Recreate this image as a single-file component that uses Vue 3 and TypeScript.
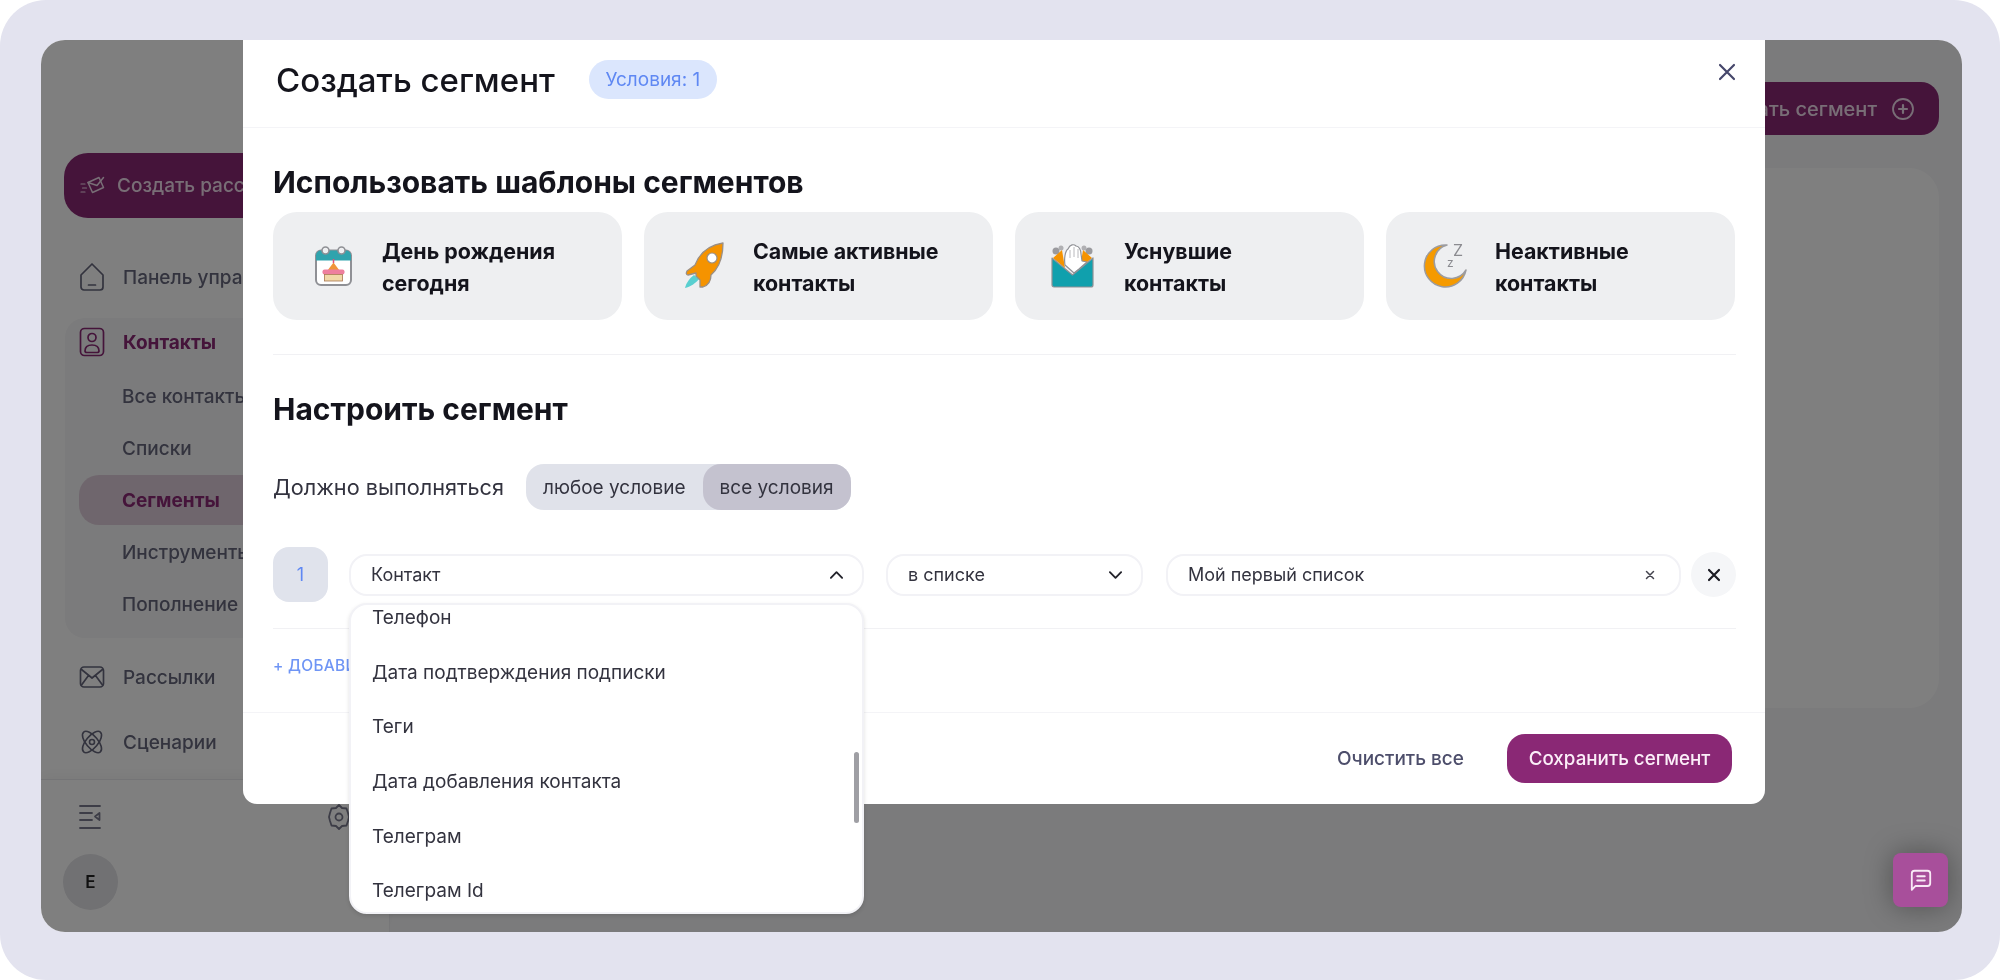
<template>
  <div class="page">
    <div class="window">
      <aside class="sidebar">
        <div class="side-top">
          <button class="create-btn">
            <svg class="create-ic" viewBox="0 0 28 24" fill="none" stroke="currentColor" stroke-width="1.5" stroke-linejoin="round" stroke-linecap="round">
              <path d="M9 8.500 20 3.500l4.500 10-11 5z" />
              <path d="M9 8.500l9 3 6.500-8" />
              <path d="M2 10h4M3.500 14h4M2 18h4" stroke-width="1.2" />
            </svg>
            <span>Создать рассылку</span>
          </button>

          <a class="nav-item nav-first">
            <svg class="nav-ic" viewBox="0 0 26 30" fill="none" stroke="currentColor" stroke-width="1.7" stroke-linejoin="round" stroke-linecap="round">
              <path d="M2 13 13 2l11 11v12a3 3 0 0 1-3 3H5a3 3 0 0 1-3-3z" />
              <path d="M9.500 23h7" />
            </svg>
            <span>Панель управления</span>
          </a>

          <div class="nav-group">
            <a class="nav-item nav-head">
              <svg class="nav-ic" viewBox="0 0 26 30" fill="none" stroke="currentColor" stroke-width="1.7" stroke-linejoin="round">
                <rect x="1.500" y="1.500" width="23" height="27" rx="4" />
                <circle cx="13" cy="10.500" r="4" />
                <path d="M6 24c0-4 3-6 7-6s7 2 7 6c0 1-1 1.500-2 1.500H8c-1 0-2-.5-2-1.500z" />
              </svg>
              <span>Контакты</span>
            </a>
            <a v-for="item in contactLinks" :key="item" class="sub-item" :class="{ active: item === 'Сегменты' }">{{ item }}</a>
          </div>

          <a class="nav-item nav-mail">
            <svg class="nav-ic" viewBox="0 0 26 26" fill="none" stroke="currentColor" stroke-width="1.7" stroke-linejoin="round" stroke-linecap="round">
              <rect x="1.500" y="3" width="23" height="20" rx="3.500" />
              <path d="M2.500 5.500 13 14l10.500-8.500M2.500 21l7-9.500M23.500 21l-7-9.500" />
            </svg>
            <span>Рассылки</span>
          </a>
          <a class="nav-item nav-flow">
            <svg class="nav-ic" viewBox="0 0 26 30" fill="none" stroke="currentColor" stroke-width="1.600">
              <ellipse cx="13" cy="15" rx="6" ry="13" transform="rotate(40 13 15)" />
              <ellipse cx="13" cy="15" rx="6" ry="13" transform="rotate(-40 13 15)" />
              <circle cx="13" cy="15" r="2.500" />
            </svg>
            <span>Сценарии</span>
          </a>
        </div>

        <div class="side-foot">
          <div class="foot-row">
            <svg class="foot-ic" viewBox="0 0 24 28" fill="none" stroke="currentColor" stroke-width="1.800" stroke-linecap="round">
              <path d="M2 3h20M2 10h12M2 17h12M2 25h20" />
              <path d="M21.500 10 17 13.500l4.500 3.500z" stroke-linejoin="round" />
            </svg>
            <svg class="foot-ic gear" viewBox="0 0 24 28" fill="none" stroke="currentColor" stroke-width="1.800" stroke-linejoin="round">
              <path d="M12 2l3 3 4.500.5L21 10l1 4-1 4-1.500 4.500L15 23l-3 3-3-3-4.500-.5L3 18l-1-4 1-4 1.500-4.500L9 5z" />
              <circle cx="12" cy="14" r="3.500" />
            </svg>
          </div>
          <div class="user-row">
            <div class="avatar">Е</div>
            <span class="dots">⋮</span>
          </div>
        </div>
      </aside>

      <main class="content">
        <button class="segment-btn">
          <span>Создать сегмент</span>
          <svg class="plus-ic" viewBox="0 0 24 24" fill="none" stroke="currentColor" stroke-width="1.800" stroke-linecap="round">
            <circle cx="12" cy="12" r="10" />
            <path d="M12 8v8M8 12h8" stroke-width="2.200" />
          </svg>
        </button>
        <div class="content-card"></div>
      </main>

      <div class="overlay">
        <section class="modal">
          <header class="modal-header">
            <h2 class="modal-title">Создать сегмент</h2>
            <span class="badge">Условия: {{ conditions.length }}</span>
            <svg class="close-ic" viewBox="0 0 20 20" fill="none" stroke="currentColor" stroke-width="2.200" stroke-linecap="round">
              <path d="M3 3l14 14M17 3 3 17" />
            </svg>
          </header>

          <div class="modal-body">
            <h3 class="section-title templates-title">Использовать шаблоны сегментов</h3>
            <div class="templates">
              <div class="template">
                <div class="template-ic">
                  <svg viewBox="-5.500 -3.500 50 48" width="50" height="48">
                    <rect x="1.500" y="5" width="35" height="34.500" rx="5" fill="#fff" stroke="#8f9095" stroke-width="2" />
                    <path d="M1.500 15V10a5 5 0 0 1 5-5h25a5 5 0 0 1 5 5v5z" fill="#2fa3ad" />
                    <circle cx="11" cy="5" r="3.500" fill="#eeeff1" stroke="#8f9095" stroke-width="1.600" />
                    <circle cx="27" cy="5" r="3.500" fill="#eeeff1" stroke="#8f9095" stroke-width="1.600" />
                    <path d="M19 17l6 8H13z" fill="#f0953a" />
                    <path d="M19 13.500v4" stroke="#e0507a" stroke-width="1.500" />
                    <rect x="8" y="24" width="22" height="5" rx="2" fill="#ee7f9e" />
                    <rect x="10" y="29" width="18" height="6.500" fill="#f1d8a8" stroke="#a8764f" stroke-width=".8" />
                  </svg>
                </div>
                <span class="template-text">День рождения<br />сегодня</span>
              </div>

              <div class="template">
                <div class="template-ic">
                  <svg viewBox="-2 0 50 48" width="50" height="48">
                    <path d="M3 46c1-5 5-10 9-13l5 4c-3 4-9 8-14 9z" fill="#59cfd0" />
                    <path d="M41 1C28 3 18 10 13 23L5 29c-1 2-1 4 1 4l8-2v3l4 4v7h3c6-2 8-7 8-12C37 26 41 14 41 1z" fill="#f59300" stroke="#9a8f85" stroke-width="1.300" stroke-linejoin="round" />
                    <circle cx="30" cy="16" r="5" fill="#fff" stroke="#9a8f85" stroke-width="1.200" />
                  </svg>
                </div>
                <span class="template-text">Самые активные<br />контакты</span>
              </div>

              <div class="template">
                <div class="template-ic">
                  <svg viewBox="1 1 50 48" width="50" height="48">
                    <circle cx="6" cy="10" r="3.500" fill="#9a9a9e" />
                    <circle cx="11" cy="7" r="2.500" fill="#b0b0b3" />
                    <circle cx="39" cy="10" r="3.500" fill="#9a9a9e" />
                    <circle cx="34" cy="7" r="2.500" fill="#b0b0b3" />
                    <path d="M3 17l9-8 3 18zM42 17l-9-8-3 18z" fill="#f59300" />
                    <path d="M15 24c-1-6 0-14 3-16 2-5 6-5 8-3 3 0 5 4 5 8l1 7 5 1-8 7-5 4z" fill="#fff" stroke="#8f9095" stroke-width="1.200" stroke-linejoin="round" />
                    <path d="M20 9v8M24 6v10M28 8v9" stroke="#b8b8bc" stroke-width="1" />
                    <path d="M2 17l20.500 17L43 17v27a2 2 0 0 1-2 2H4a2 2 0 0 1-2-2z" fill="#10a0ad" stroke="#8f9095" stroke-width="1.200" stroke-linejoin="round" />
                  </svg>
                </div>
                <span class="template-text">Уснувшие<br />контакты</span>
              </div>

              <div class="template">
                <div class="template-ic">
                  <svg viewBox="0 -1 50 48" width="50" height="48">
                    <path d="M25 2A21 21 0 1 0 44 27 17 17 0 1 1 25 2z" fill="#f59a00" stroke="#9c9ca0" stroke-width="1.500" stroke-linejoin="round" />
                    <text x="25" y="24" class="zz zz-s">z</text>
                    <text x="31" y="13" class="zz">Z</text>
                  </svg>
                </div>
                <span class="template-text">Неактивные<br />контакты</span>
              </div>
            </div>

            <div class="divider divider-top"></div>

            <h3 class="section-title setup-title">Настроить сегмент</h3>

            <div class="match-row">
              <span class="match-label">Должно выполняться</span>
              <div class="toggle">
                <span class="toggle-opt">любое условие</span>
                <span class="toggle-opt on">все условия</span>
              </div>
            </div>

            <div v-for="(c, idx) in conditions" :key="idx" class="cond-row">
              <div class="cond-num">{{ idx + 1 }}</div>
              <div class="field field-a">
                <span>{{ c.field }}</span>
                <svg class="chev" viewBox="0 0 16 10" fill="none" stroke="currentColor" stroke-width="2" stroke-linecap="round" stroke-linejoin="round"><path d="M2 8l6-6 6 6" /></svg>
                <div class="dropdown">
                  <div class="dropdown-list">
                    <div v-for="opt in fieldOptions" :key="opt" class="dropdown-item">{{ opt }}</div>
                  </div>
                  <div class="scroll-thumb"></div>
                </div>
              </div>
              <div class="field field-b">
                <span>{{ c.op }}</span>
                <svg class="chev" viewBox="0 0 16 10" fill="none" stroke="currentColor" stroke-width="2" stroke-linecap="round" stroke-linejoin="round"><path d="M2 2l6 6 6-6" /></svg>
              </div>
              <div class="field field-c">
                <span>{{ c.value }}</span>
                <svg class="clear-ic" viewBox="0 0 10 10" fill="none" stroke="currentColor" stroke-width="1.500" stroke-linecap="round"><path d="M1.500 1.500l7 7M8.500 1.500l-7 7" /></svg>
              </div>
              <div class="cond-del">
                <svg viewBox="0 0 14 14" width="14" height="14" fill="none" stroke="currentColor" stroke-width="2.200" stroke-linecap="round"><path d="M2 2l10 10M12 2 2 12" /></svg>
              </div>
            </div>

            <div class="divider divider-row"></div>
            <a class="add-link">+ ДОБАВИТЬ УСЛОВИЕ</a>
          </div>

          <footer class="modal-footer">
            <button class="btn-clear">Очистить все</button>
            <button class="btn-save">Сохранить сегмент</button>
          </footer>
        </section>
      </div>

      <button class="chat-btn">
        <svg viewBox="0 0 24 24" width="26" height="26" fill="none" stroke="currentColor" stroke-width="1.700" stroke-linejoin="round" stroke-linecap="round">
          <path d="M3.500 21V6a2.500 2.500 0 0 1 2.500-2.500h12A2.500 2.500 0 0 1 20.500 6v9a2.500 2.500 0 0 1-2.500 2.500H7z" />
          <path d="M8.500 8.500h7M8.500 12.500h7" />
        </svg>
      </button>
    </div>
  </div>
</template>

<script setup lang="ts">
interface Condition {
  field: string
  op: string
  value: string
}

const contactLinks = ['Все контакты', 'Списки', 'Сегменты', 'Инструменты', 'Пополнение']

const conditions: Condition[] = [
  { field: 'Контакт', op: 'в списке', value: 'Мой первый список' }
]

const fieldOptions = [
  'Телефон',
  'Дата подтверждения подписки',
  'Теги',
  'Дата добавления контакта',
  'Телеграм',
  'Телеграм Id'
]
</script>

<style>
html, body { margin: 0; background: #fff; }
</style>

<style scoped>
* { box-sizing: border-box; }
.page {
  width: 2000px; height: 980px;
  background: #e3e3ef;
  border-radius: 46px;
  padding: 40px 38px 48px 41px;
  font-family: Inter, "Noto Sans", sans-serif;
  color: #14141c;
  filter: blur(0.55px);
}
.window {
  position: relative;
  height: 892px;
  background: #f7f7f9;
  border-radius: 24px;
  overflow: hidden;
  display: flex;
}
button { font-family: inherit; border: none; }

/* sidebar */
.sidebar {
  width: 349px; flex: none;
  background: #fff;
  border-right: 1px solid #f0f0f3;
  display: flex; flex-direction: column; justify-content: space-between;
}
.side-top { padding: 113px 0 0 23px; }
.create-btn {
  width: 320px; height: 65px;
  background: #8a2875;
  border-radius: 24px;
  color: #f1dcec;
  display: flex; align-items: center; gap: 10px;
  padding: 0 0 0 15px;
  font-size: 19px; font-weight: 500;
}
.create-ic { width: 28px; height: 24px; }
.nav-item {
  display: flex; align-items: center; gap: 18px;
  font-size: 19px; font-weight: 500;
  color: #66677c;
  padding-left: 15px;
}
.nav-ic { width: 26px; height: 30px; flex: none; }
.nav-first { margin-top: 44px; height: 30px; }
.nav-group {
  margin: 26px 0 0 1px;
  width: 318px; height: 320px;
  background: #f6f6f8;
  border-radius: 20px;
  padding: 8px 0 0 14px;
}
.nav-head { padding-left: 0; height: 32px; color: #8a2875; font-weight: 700; margin-bottom: 13px; }
.sub-item {
  display: flex; align-items: center;
  height: 50px; margin-bottom: 2px;
  padding-left: 43px;
  width: 304px;
  font-size: 19px; font-weight: 500;
  color: #66677c;
  border-radius: 20px;
}
.sub-item.active { background: #dfcdda; color: #8a2875; font-weight: 700; }
.nav-mail { margin-top: 24px; height: 30px; }
.nav-flow { margin-top: 35px; height: 30px; }
.side-foot {
  height: 153px;
  border-top: 1px solid #e8e8ec;
  box-shadow: 0 -6px 10px rgba(0, 0, 0, 0.03);
  padding: 23px 26px 0 22px;
}
.foot-row { display: flex; justify-content: space-between; color: #7a7b8e; padding: 0 0 0 15px; }
.foot-ic { width: 24px; height: 28px; }
.foot-ic.gear { margin-right: 12px; }
.user-row { display: flex; justify-content: space-between; align-items: center; margin-top: 23px; }
.avatar {
  width: 55px; height: 56px; border-radius: 50%;
  background: #e2e2e6; color: #222;
  display: flex; align-items: center; justify-content: center;
  font-size: 17px; font-weight: 600;
}
.dots { color: #555; font-size: 22px; }

/* page behind the modal */
.content { flex: 1; padding: 42px 23px 0 0; display: flex; flex-direction: column; align-items: flex-end; }
.segment-btn {
  width: 320px; height: 53px;
  background: #8a2875; color: #f1dcec;
  border-radius: 18px;
  display: flex; align-items: center; justify-content: flex-end; gap: 14px;
  padding: 0 24px 0 0;
  font-size: 20px; font-weight: 500;
}
.plus-ic { width: 24px; height: 24px; }
.content-card {
  width: 600px; height: 540px; margin-top: 33px;
  background: #fff; border-radius: 30px;
}

/* modal */
.overlay {
  position: absolute; inset: 0;
  background: rgba(0, 0, 0, 0.5);
  display: flex; justify-content: center;
  padding-left: 5px;
}
.modal {
  width: 1522px; height: 764px;
  background: #fff;
  border-radius: 0 0 14px 14px;
  display: flex; flex-direction: column;
}
.modal-header {
  height: 88px; flex: none;
  border-bottom: 1px solid #f4f4f7;
  display: flex; align-items: center;
  padding: 0 28px 8px 33px;
}
.modal-title { margin: 0; font-size: 33px; font-weight: 500; color: #14141c; }
.badge {
  margin-left: 34px;
  width: 128px; height: 39px;
  border-radius: 20px;
  background: #dbe6fd; color: #5f88f3;
  display: flex; align-items: center; justify-content: center;
  font-size: 19px;
}
.close-ic { width: 20px; height: 20px; margin: 0 0 16px auto; color: #46476b; }
.modal-body { flex: 1; padding: 0 29px 0 30px; position: relative; }
.section-title { margin: 0; font-size: 30px; font-weight: 700; color: #14141c; line-height: 36px; }
.templates-title { margin-top: 36px; }
.templates { display: grid; grid-template-columns: repeat(4, 349px); gap: 22px; margin-top: 12px; }
.template {
  height: 108px;
  background: #eeeff1;
  border-radius: 24px;
  display: flex; align-items: center; gap: 23px;
  padding-left: 36px;
}
.template-ic { width: 50px; height: 48px; flex: none; display: flex; }
.template-text { font-size: 21.400px; font-weight: 700; line-height: 32px; color: #14141c; padding-top: 1px; }
.zz { font-size: 16px; fill: #8b8b90; font-family: Inter, sans-serif; }
.zz-s { font-size: 12px; }
.divider { height: 1px; background: #f1f1f4; }
.divider-top { margin-top: 34px; }
.divider-row { margin-top: 26px; }
.setup-title { margin-top: 36px; }
.match-row { display: flex; align-items: center; margin-top: 37px; }
.match-label { font-size: 21.700px; color: #33333f; width: 253px; white-space: nowrap; }
.toggle {
  display: flex; height: 46px;
  background: #e0e2ea; border-radius: 18px;
  font-size: 19px; color: #33333f;
}
.toggle-opt { display: flex; align-items: center; padding: 0 17px; }
.toggle-opt.on { background: #c4c2cf; border-radius: 18px; }
.cond-row { display: flex; align-items: center; margin-top: 37px; height: 55px; }
.cond-num {
  width: 55px; height: 55px; flex: none;
  background: #e0e3ec; border-radius: 16px;
  color: #5f88f3; font-size: 18px;
  display: flex; align-items: center; justify-content: center;
}
.field {
  height: 42px;
  border: 2px solid #f2f2f6; border-radius: 18px;
  display: flex; align-items: center; justify-content: space-between;
  padding: 0 18px 0 20px;
  font-size: 18px; color: #33333f;
  position: relative;
}
.field-a { width: 515px; margin-left: 21px; }
.field-b { width: 257px; margin-left: 22px; }
.field-c { width: 515px; margin-left: 23px; }
.chev { width: 15px; height: 10px; color: #22222a; }
.clear-ic { width: 10px; height: 10px; color: #44444e; margin-right: 6px; }
.cond-del {
  width: 45px; height: 45px; margin-left: 10px; flex: none;
  border-radius: 50%; background: #f5f6f8; color: #1c1c24;
  display: flex; align-items: center; justify-content: center;
}
.dropdown {
  position: absolute; left: -2px; top: 47px;
  width: 515px; height: 311px;
  background: #fff;
  border-radius: 18px;
  border: 2px solid #f2f2f6;
  overflow: hidden;
  box-shadow: 0 2px 4px rgba(0, 0, 0, 0.12);
  z-index: 3;
}
.dropdown-list { margin-top: -14px; }
.dropdown-item {
  height: 54.600px;
  display: flex; align-items: center;
  padding-left: 21px;
  font-size: 19px; color: #33333f;
}
.scroll-thumb {
  position: absolute; right: 3px; top: 147px;
  width: 5px; height: 71px;
  background: #9f9fa4; border-radius: 3px;
}
.add-link {
  display: block; margin-top: 27px;
  font-size: 15.500px; font-weight: 500; letter-spacing: 0.3px;
  color: #6f95f5;
}
.modal-footer {
  height: 92px; flex: none;
  border-top: 1px solid #f4f4f7;
  display: flex; align-items: center; justify-content: flex-end;
  padding: 0 33px 0 0;
}
.btn-clear { background: none; color: #4d4e6b; font-size: 19px; font-weight: 500; margin-right: 37px; }
.btn-save {
  width: 225px; height: 49px;
  background: #8a2875; color: #fbeef8;
  border-radius: 18px;
  font-size: 18.800px; font-weight: 500;
}
.chat-btn {
  position: absolute; right: 14px; bottom: 25px;
  width: 55px; height: 54px;
  background: #a84f9b; color: #f8e9f5;
  border-radius: 8px;
  box-shadow: 0 0 28px rgba(0, 0, 0, 0.35);
  display: flex; align-items: center; justify-content: center;
  padding: 0;
}
</style>
